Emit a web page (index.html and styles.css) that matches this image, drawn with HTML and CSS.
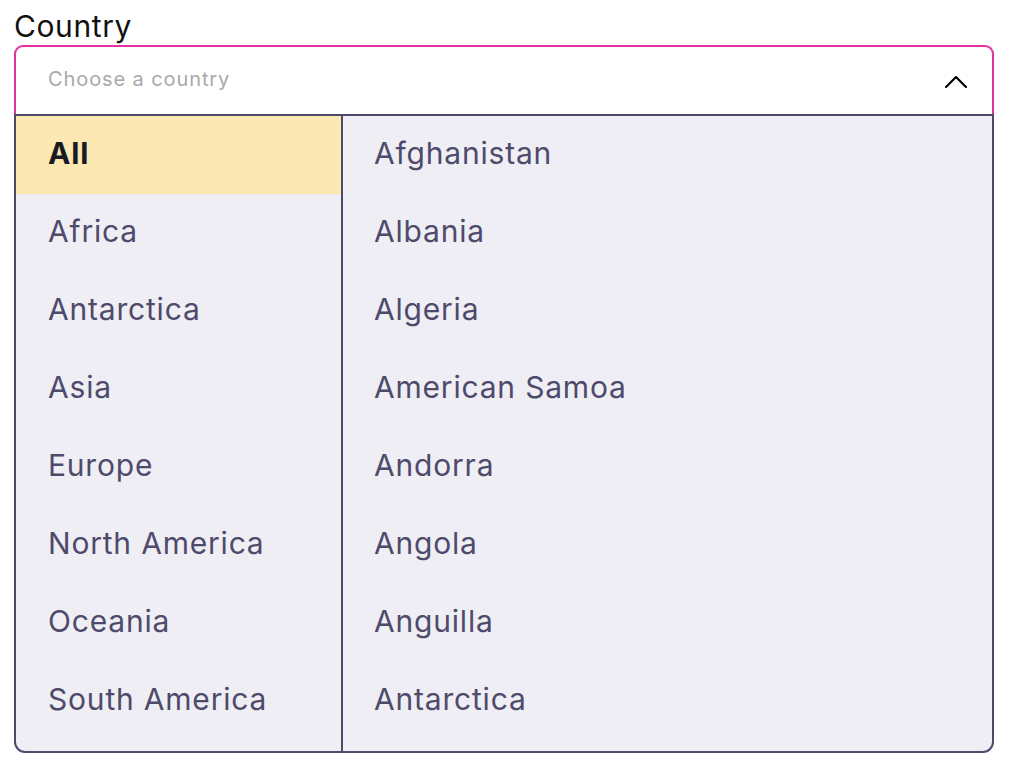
FILE: index.html
```html
<!DOCTYPE html>
<html lang="en">
<head>
<meta charset="utf-8">
<title>Country select</title>
<link rel="stylesheet" href="styles.css">
</head>
<body>
<div class="field">
  <label class="label">Country</label>
  <div class="control">
    <div class="input">
      <span class="placeholder">Choose a country</span>
      <svg class="chevron" width="24" height="14" viewBox="0 0 24 14"><path d="M2 12 L12 2 L22 12" fill="none" stroke="#000" stroke-width="2.2" stroke-linecap="round" stroke-linejoin="round"/></svg>
    </div>
    <div class="panel">
      <ul class="regions">
        <li class="item active">All</li>
        <li class="item">Africa</li>
        <li class="item">Antarctica</li>
        <li class="item">Asia</li>
        <li class="item">Europe</li>
        <li class="item">North America</li>
        <li class="item">Oceania</li>
        <li class="item">South America</li>
      </ul>
      <ul class="countries">
        <li class="item">Afghanistan</li>
        <li class="item">Albania</li>
        <li class="item">Algeria</li>
        <li class="item">American Samoa</li>
        <li class="item">Andorra</li>
        <li class="item">Angola</li>
        <li class="item">Anguilla</li>
        <li class="item">Antarctica</li>
      </ul>
    </div>
  </div>
</div>
</body>
</html>
```
FILE: styles.css
```css
* { box-sizing: border-box; }
body {
  margin: 0;
  padding: 8px 14px;
  font-family: "Inter", "Noto Sans", sans-serif;
  background: #fff;
}
.field { width: 980px; }
.label {
  display: block;
  font-size: 30px;
  letter-spacing: 0.6px;
  line-height: 36px;
  color: #111;
  margin-bottom: 1px;
}
.input {
  height: 69px;
  border: 2px solid #e0339f;
  border-bottom: none;
  border-radius: 9px 9px 0 0;
  display: flex;
  align-items: center;
  justify-content: space-between;
  padding: 0 24px 4px 32px;
}
.placeholder {
  font-size: 20px;
  letter-spacing: 0.9px;
  color: #a9a9a9;
}
.chevron { margin-top: 6px; }
.panel {
  display: flex;
  height: 639px;
  border: 2px solid #4e4a6b;
  border-radius: 0 0 11px 11px;
  background: #eeeef4;
  overflow: hidden;
}
ul { list-style: none; margin: 0; padding: 0; }
.regions {
  width: 327px;
  border-right: 2px solid #4e4a6b;
}
.countries { flex: 1; }
.item {
  height: 78px;
  display: flex;
  align-items: center;
  padding: 0 0 4px 32px;
  font-size: 30px;
  letter-spacing: 0.8px;
  color: #4e4a6b;
}
.countries .item { padding-left: 31px; }
.item.active {
  background: #fce8b2;
  color: #1a1a24;
  font-weight: 700;
}
```
